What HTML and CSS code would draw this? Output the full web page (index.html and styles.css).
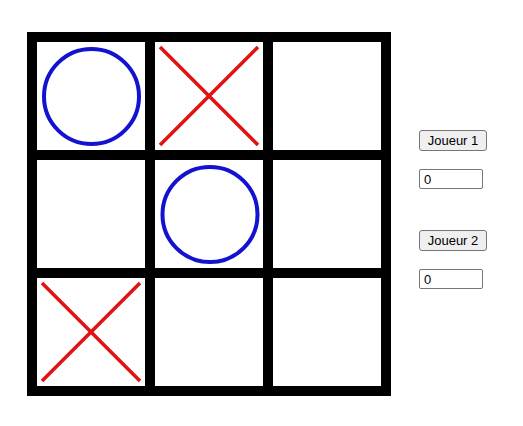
FILE: index.html
```html
<!DOCTYPE html>
<html lang="fr">

<head>
    <meta charset="UTF-8">
    <title>Morpion</title>
    <link rel="stylesheet" href="styles.css">
</head>

<body>
    <div class="game">
        <!-- Plateau -->
        <div class="board">
            <div class="cell">
                <svg viewBox="0 0 108 108"><circle class="o" cx="54.5" cy="54.5" r="47.5" /></svg>
            </div>
            <div class="cell">
                <svg viewBox="0 0 108 108"><line class="x" x1="5" y1="5" x2="103" y2="103" /><line class="x" x1="103" y1="5" x2="5" y2="103" /></svg>
            </div>
            <div class="cell"></div>
            <div class="cell"></div>
            <div class="cell">
                <svg viewBox="0 0 108 108"><circle class="o" cx="55" cy="54.5" r="47.5" /></svg>
            </div>
            <div class="cell"></div>
            <div class="cell">
                <svg viewBox="0 0 108 108"><line class="x" x1="5" y1="5" x2="103" y2="103" /><line class="x" x1="103" y1="5" x2="5" y2="103" /></svg>
            </div>
            <div class="cell"></div>
            <div class="cell"></div>
        </div>

        <!-- Scores -->
        <div class="scores">
            <button class="player">Joueur 1</button>
            <input class="score" type="text" value="0">
            <button class="player second">Joueur 2</button>
            <input class="score" type="text" value="0">
        </div>
    </div>
</body>

</html>
```

FILE: styles.css
```css
* {
    margin: 0;
    padding: 0;
    box-sizing: border-box;
}

body {
    background: #fff;
    font-family: 'Liberation Sans', Arial, sans-serif;
    padding: 32px 0 0 27px;
}

.game {
    display: flex;
    align-items: flex-start;
}

.board {
    display: grid;
    grid-template-columns: repeat(3, 108px);
    grid-auto-rows: 108px;
    gap: 10px;
    padding: 10px;
    background: #000;
}

.cell {
    background: #fff;
}

.cell svg {
    display: block;
    width: 108px;
    height: 108px;
}

.o {
    fill: none;
    stroke: #1212d0;
    stroke-width: 4;
}

.x {
    stroke: #e01212;
    stroke-width: 3.5;
}

.scores {
    display: flex;
    flex-direction: column;
    align-items: flex-start;
    margin: 98px 0 0 28px;
}

.player {
    width: 68px;
    height: 21px;
    font-family: 'Liberation Sans', Arial, sans-serif;
    font-size: 13px;
    color: #000;
    background: #efefef;
    border: 1px solid #767676;
    border-radius: 3px;
}

.player.second {
    margin-top: 41px;
}

.score {
    width: 64px;
    height: 20px;
    margin-top: 18px;
    padding: 1px 4px;
    font-family: 'Liberation Sans', Arial, sans-serif;
    font-size: 13px;
    color: #000;
    border: 1px solid #767676;
    border-radius: 2px;
}
```
